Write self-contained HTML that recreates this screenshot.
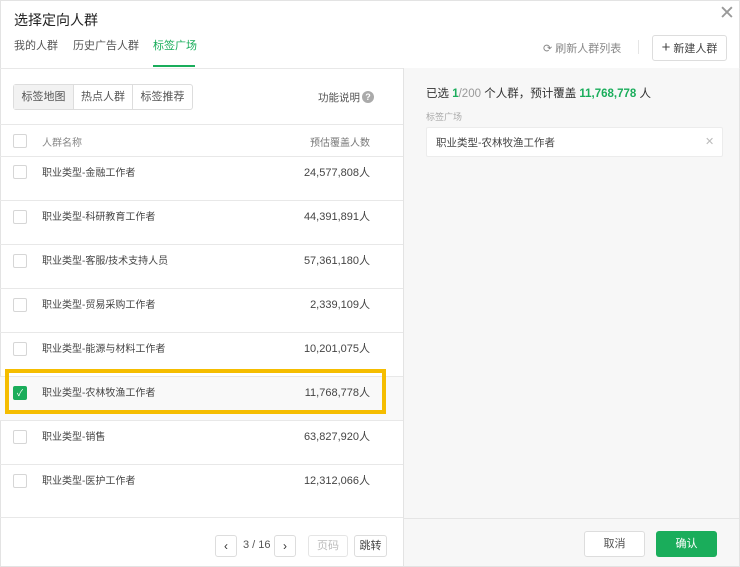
<!DOCTYPE html><html><head><meta charset="utf-8"><style>
*{box-sizing:border-box;margin:0;padding:0}
body{width:740px;height:567px;background:#fff;font-family:"Liberation Sans","Noto Sans CJK SC",sans-serif;color:#333;position:relative;overflow:hidden;font-size:11px}
.a{position:absolute}
.cb{position:absolute;left:13px;width:14px;height:14px;border:1px solid #d6d6d6;border-radius:2px;background:#fff}
.row{position:absolute;left:0;width:403px;height:44px;border-bottom:1px solid #e8e8e8}
.row .n{position:absolute;left:42px;top:7px;font-size:10px;color:#444}
.row .v{position:absolute;right:33px;top:7px;font-size:11px;color:#444}
.btn{position:absolute;border:1px solid #ddd;border-radius:3px;background:#fff;text-align:center}
</style></head><body>
<div class="a" style="left:0;top:0;width:740px;height:567px;border:1px solid #e3e3e3"></div>
<div class="a" style="left:14px;top:10px;font-size:14px;color:#222">选择定向人群</div>
<div class="a" style="left:719px;top:2px;font-size:19px;color:#999">✕</div>
<div class="a" style="left:14px;top:37px;font-size:11px;color:#555">我的人群</div>
<div class="a" style="left:73px;top:37px;font-size:11px;color:#555">历史广告人群</div>
<div class="a" style="left:153px;top:37px;font-size:11px;color:#1aad5b">标签广场</div>
<div class="a" style="left:153px;top:65px;width:42px;height:2px;background:#1aad5b"></div>
<div class="a" style="left:0;top:68px;width:740px;height:1px;background:#e8e8e8"></div>
<div class="a" style="left:543px;top:40px;font-size:11px;color:#888">⟳ 刷新人群列表</div>
<div class="a" style="left:638px;top:40px;width:1px;height:14px;background:#e5e5e5"></div>
<div class="btn" style="left:652px;top:35px;width:75px;height:26px;line-height:24px;font-size:11px;color:#444"><span style="font-size:15px">+</span> 新建人群</div>
<div class="a" style="left:403px;top:68px;width:336px;height:498px;background:#f7f7f7;border-left:1px solid #e3e3e3"></div>
<div class="a" style="left:403px;top:518px;width:336px;height:1px;background:#e5e5e5"></div>
<div class="a" style="left:426px;top:85px;font-size:11.5px;color:#333">已选 <b style="color:#1aad5b">1</b><span style="color:#999">/200</span> 个人群，预计覆盖 <b style="color:#1aad5b">11,768,778</b> 人</div>
<div class="a" style="left:426px;top:110px;font-size:9px;color:#aaa">标签广场</div>
<div class="a" style="left:426px;top:127px;width:297px;height:30px;background:#fff;border:1px solid #ececec;border-radius:2px"></div>
<div class="a" style="left:436px;top:135px;font-size:10.5px;color:#444">职业类型-农林牧渔工作者</div>
<div class="a" style="left:705px;top:135px;font-size:11px;color:#bbb">✕</div>
<div class="btn" style="left:584px;top:531px;width:61px;height:26px;line-height:24px;color:#555">取消</div>
<div class="a" style="left:656px;top:531px;width:61px;height:26px;line-height:26px;background:#1aad5b;color:#fff;border-radius:3px;text-align:center">确认</div>
<div class="a" style="left:13px;top:84px;width:180px;height:26px;border:1px solid #ddd;border-radius:3px;background:#fff;display:flex">
<div style="width:60px;background:#f2f2f2;border-right:1px solid #ddd;text-align:center;line-height:24px;color:#555">标签地图</div>
<div style="width:59px;border-right:1px solid #ddd;text-align:center;line-height:24px;color:#555">热点人群</div>
<div style="flex:1;text-align:center;line-height:24px;color:#555">标签推荐</div></div>
<div class="a" style="left:318px;top:90px;font-size:10.5px;color:#555">功能说明</div>
<div class="a" style="left:362px;top:91px;width:12px;height:12px;border-radius:6px;background:#aaa;color:#fff;font-size:9px;text-align:center;line-height:12px;font-weight:bold">?</div>
<div class="a" style="left:0;top:124px;width:403px;height:1px;background:#e8e8e8"></div>
<div class="row" style="top:125px;height:32px"><div class="cb" style="top:9px"></div><div class="n" style="top:9px;color:#888">人群名称</div><div class="v" style="top:9px;color:#777;font-size:10px">预估覆盖人数</div></div>
<div class="row" style="top:157px"><div class="cb" style="top:8px"></div><div class="n">职业类型-金融工作者</div><div class="v">24,577,808人</div></div>
<div class="row" style="top:201px"><div class="cb" style="top:9px"></div><div class="n">职业类型-科研教育工作者</div><div class="v">44,391,891人</div></div>
<div class="row" style="top:245px"><div class="cb" style="top:9px"></div><div class="n">职业类型-客服/技术支持人员</div><div class="v">57,361,180人</div></div>
<div class="row" style="top:289px"><div class="cb" style="top:9px"></div><div class="n">职业类型-贸易采购工作者</div><div class="v">2,339,109人</div></div>
<div class="row" style="top:333px"><div class="cb" style="top:9px"></div><div class="n">职业类型-能源与材料工作者</div><div class="v">10,201,075人</div></div>
<div class="row" style="top:377px;background:#f9f9f9"><div class="cb" style="top:9px;background:#1aad5b;border-color:#1aad5b;color:#fff;font-size:9px;text-align:center;line-height:12px">✓</div><div class="n">职业类型-农林牧渔工作者</div><div class="v">11,768,778人</div></div>
<div class="row" style="top:421px"><div class="cb" style="top:9px"></div><div class="n">职业类型-销售</div><div class="v">63,827,920人</div></div>
<div class="row" style="top:465px;height:53px"><div class="cb" style="top:9px"></div><div class="n">职业类型-医护工作者</div><div class="v">12,312,066人</div></div>
<div class="a" style="left:5px;top:369px;width:381px;height:45px;border:4px solid #f5bd00"></div>
<div class="btn" style="left:215px;top:535px;width:22px;height:22px;line-height:20px;font-size:12px">‹</div>
<div class="a" style="left:243px;top:539px;color:#555">3 / 16</div>
<div class="btn" style="left:274px;top:535px;width:22px;height:22px;line-height:20px;font-size:12px">›</div>
<div class="btn" style="left:308px;top:535px;width:40px;height:22px;line-height:20px;color:#bbb;border-color:#e5e5e5">页码</div>
<div class="btn" style="left:354px;top:535px;width:33px;height:22px;line-height:20px;color:#444">跳转</div>
</body></html>
